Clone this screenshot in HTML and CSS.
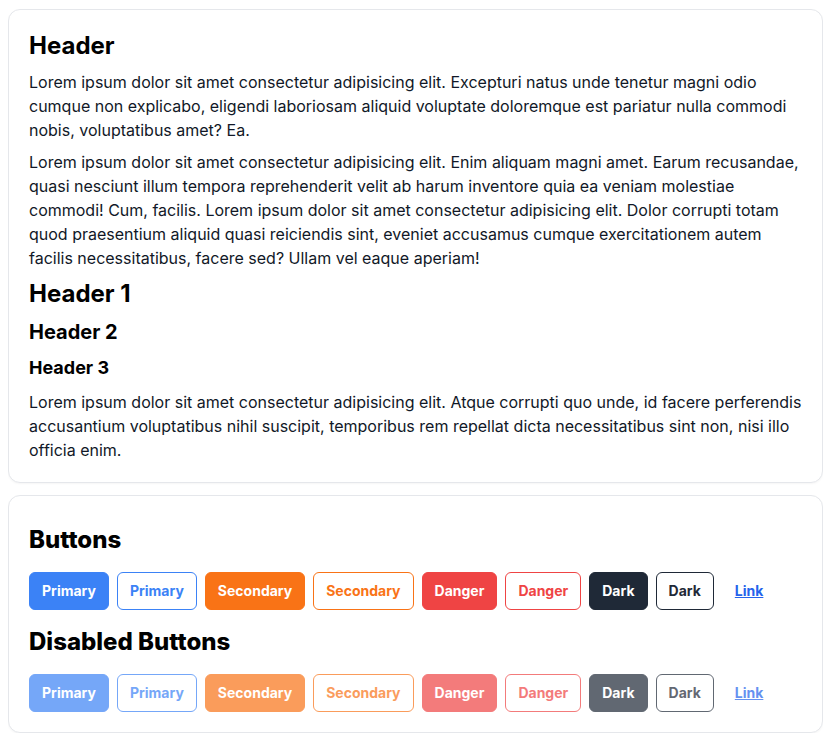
FILE: index.html
```html
<!DOCTYPE html>
<html lang="en">
<head>
<meta charset="utf-8">
<title>UI Kit</title>
<link rel="stylesheet" href="styles.css">
</head>
<body>
<main class="page">
  <section class="card">
    <h2 class="h-xl">Header</h2>
    <p>Lorem ipsum dolor sit amet consectetur adipisicing elit. Excepturi natus unde tenetur magni odio cumque non explicabo, eligendi laboriosam aliquid voluptate doloremque est pariatur nulla commodi nobis, voluptatibus amet? Ea.</p>
    <p>Lorem ipsum dolor sit amet consectetur adipisicing elit. Enim aliquam magni amet. Earum recusandae, quasi nesciunt illum tempora reprehenderit velit ab harum inventore quia ea veniam molestiae commodi! Cum, facilis. Lorem ipsum dolor sit amet consectetur adipisicing elit. Dolor corrupti totam quod praesentium aliquid quasi reiciendis sint, eveniet accusamus cumque exercitationem autem facilis necessitatibus, facere sed? Ullam vel eaque aperiam!</p>
    <h1 class="h-xl">Header 1</h1>
    <h2 class="h-lg">Header 2</h2>
    <h3 class="h-md">Header 3</h3>
    <p>Lorem ipsum dolor sit amet consectetur adipisicing elit. Atque corrupti quo unde, id facere perferendis accusantium voluptatibus nihil suscipit, temporibus rem repellat dicta necessitatibus sint non, nisi illo officia enim.</p>
  </section>
  <section class="card card-buttons">
    <h2 class="h-xl h-heavy">Buttons</h2>
    <div class="btn-row">
      <button class="btn btn-primary">Primary</button>
      <button class="btn btn-primary-outline">Primary</button>
      <button class="btn btn-secondary">Secondary</button>
      <button class="btn btn-secondary-outline">Secondary</button>
      <button class="btn btn-danger">Danger</button>
      <button class="btn btn-danger-outline">Danger</button>
      <button class="btn btn-dark">Dark</button>
      <button class="btn btn-dark-outline">Dark</button>
      <button class="btn btn-link">Link</button>
    </div>
    <h2 class="h-xl h-heavy">Disabled Buttons</h2>
    <div class="btn-row">
      <button class="btn btn-primary" disabled>Primary</button>
      <button class="btn btn-primary-outline" disabled>Primary</button>
      <button class="btn btn-secondary" disabled>Secondary</button>
      <button class="btn btn-secondary-outline" disabled>Secondary</button>
      <button class="btn btn-danger" disabled>Danger</button>
      <button class="btn btn-danger-outline" disabled>Danger</button>
      <button class="btn btn-dark" disabled>Dark</button>
      <button class="btn btn-dark-outline" disabled>Dark</button>
      <button class="btn btn-link" disabled>Link</button>
    </div>
  </section>
</main>
</body>
</html>
```

FILE: styles.css
```css
* { box-sizing: border-box; }

body {
  margin: 9px 7px 0 8px;
  font-family: Inter, "Noto Sans", sans-serif;
  color: #111827;
  background: #ffffff;
}

.page {
  display: flex;
  flex-direction: column;
  gap: 12px;
}

.card {
  display: flex;
  flex-direction: column;
  gap: 8px;
  padding: 20px;
  border: 1px solid #e5e7eb;
  border-radius: 12px;
  background: #ffffff;
  box-shadow: 0 1px 2px rgba(0, 0, 0, 0.04);
}

.card-buttons {
  gap: 16px;
  padding-top: 28px;
}

h1, h2, h3, p { margin: 0; }

p {
  font-size: 16px;
  line-height: 24px;
}

.h-xl {
  font-size: 24px;
  line-height: 32px;
  font-weight: 700;
  color: #000000;
}

.h-heavy {
  font-weight: 800;
}

.h-lg {
  font-size: 20px;
  line-height: 28px;
  font-weight: 700;
  color: #000000;
}

.h-md {
  font-size: 18px;
  line-height: 28px;
  font-weight: 700;
  color: #000000;
}

.btn-row {
  display: flex;
  gap: 8px;
}

.btn {
  font-family: inherit;
  font-size: 14px;
  line-height: 20px;
  font-weight: 700;
  padding: 8px 12px;
  border: 1px solid transparent;
  border-radius: 6px;
  background: transparent;
  cursor: pointer;
}

.btn:disabled { opacity: 0.7; cursor: not-allowed; }

.btn-primary { background: #3b82f6; border-color: #3b82f6; color: #ffffff; }
.btn-primary-outline { background: #ffffff; border-color: #3b82f6; color: #3b82f6; }
.btn-secondary { background: #f97316; border-color: #f97316; color: #ffffff; }
.btn-secondary-outline { background: #ffffff; border-color: #f97316; color: #f97316; }
.btn-danger { background: #ef4444; border-color: #ef4444; color: #ffffff; }
.btn-danger-outline { background: #ffffff; border-color: #ef4444; color: #ef4444; }
.btn-dark { background: #1f2937; border-color: #1f2937; color: #ffffff; }
.btn-dark-outline { background: #ffffff; border-color: #1f2937; color: #1f2937; }
.btn-link {
  color: #2563eb;
  text-decoration: underline;
}
```
